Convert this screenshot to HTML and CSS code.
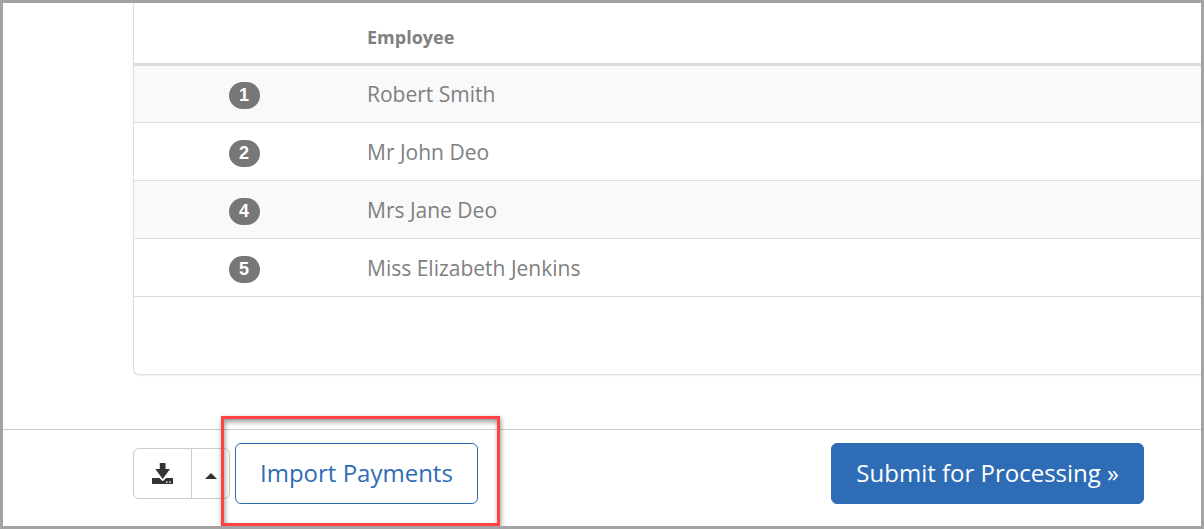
FILE: index.html
```html
<!DOCTYPE html>
<html lang="en">
<head>
    <meta charset="UTF-8">
    <meta name="viewport" content="width=device-width, initial-scale=1.0">
    <title>Import Payments</title>
    <link rel="stylesheet" href="styles.css">
</head>
<body>
    <!-- Employee list -->
    <main class="content">
        <div class="panel">
            <table class="employees">
                <thead>
                    <tr>
                        <th class="number"></th>
                        <th>Employee</th>
                    </tr>
                </thead>
                <tbody>
                    <tr>
                        <td class="number"><span class="badge">1</span></td>
                        <td>Robert Smith</td>
                    </tr>
                    <tr>
                        <td class="number"><span class="badge">2</span></td>
                        <td>Mr John Deo</td>
                    </tr>
                    <tr>
                        <td class="number"><span class="badge">4</span></td>
                        <td>Mrs Jane Deo</td>
                    </tr>
                    <tr>
                        <td class="number"><span class="badge">5</span></td>
                        <td>Miss Elizabeth Jenkins</td>
                    </tr>
                </tbody>
            </table>
        </div>
    </main>

    <!-- Action bar -->
    <footer class="actions">
        <div class="btn-group">
            <button class="btn btn-download" type="button" aria-label="Download">
                <svg width="22" height="22" viewBox="0 0 22 22" fill="#333">
                    <path d="M7.800 0h5.700v6H18L10.700 16 3.300 6h4.500z"/>
                    <path fill-rule="evenodd" d="M0 15h7.800l2.900 3 2.900-3H21v6H0zM14 18.500v1.300h1.500v-1.300zM17.200 18.500v1.300h1.500v-1.300z"/>
                    <path d="M7.200 14.300l3.500 3.500 3.500-3.500" fill="none" stroke="#fff"/>
                </svg>
            </button>
            <button class="btn btn-caret" type="button" aria-label="More downloads"><span class="caret"></span></button>
        </div>
        <div class="highlight">
            <button class="btn btn-large btn-outline" type="button">Import Payments</button>
        </div>
        <button class="btn btn-large btn-primary" type="button">Submit for Processing »</button>
    </footer>
</body>
</html>
```

FILE: styles.css
```css
* {
    box-sizing: border-box;
}

body {
    margin: 0;
    min-height: 100vh;
    border: 3px solid #a3a3a3;
    background-color: #fff;
    color: #808080;
    font-family: "Open Sans", "Noto Sans", sans-serif;
    font-size: 21px;
}

.content {
    padding-left: 130px;
}

.panel {
    padding-bottom: 77px;
    border: 1px solid #ddd;
    border-width: 0 0 1px 1px;
    border-bottom-left-radius: 6px;
    box-shadow: 0 1px 2px rgba(0, 0, 0, 0.06);
}

.employees {
    width: 100%;
    border-collapse: separate;
    border-spacing: 0;
    table-layout: fixed;
}

.employees th,
.employees td {
    padding: 0 13px;
    text-align: left;
}

.employees th {
    height: 63px;
    padding-top: 8px;
    border-bottom: 3px solid #ddd;
    font-size: 18px;
}

.employees td {
    height: 58px;
    border-bottom: 1px solid #ddd;
    line-height: 28px;
}

.employees tbody tr:nth-child(odd) {
    background-color: #f9f9f9;
}

.employees .number {
    width: 220px;
    text-align: center;
}

.employees tbody tr:first-child td {
    height: 57px;
}

.employees td.number {
    padding-top: 1px;
}

.badge {
    display: inline-block;
    min-width: 31px;
    padding: 0 10px;
    border-radius: 14px;
    background-color: #777;
    color: #fff;
    font-family: "Liberation Sans", Arial, sans-serif;
    font-size: 18px;
    font-weight: bold;
    line-height: 27px;
    vertical-align: middle;
}

/* Buttons */
.actions {
    display: flex;
    align-items: center;
    margin-top: 54px;
    padding: 13px 57px 22px 130px;
    border-top: 1px solid #ccc;
}

.btn {
    display: flex;
    align-items: center;
    justify-content: center;
    height: 51px;
    padding: 0;
    border: 1px solid #ccc;
    border-radius: 6px;
    background-color: #fff;
    font-family: inherit;
    cursor: pointer;
}

.btn-group {
    display: flex;
    margin-right: 5px;
}

.btn-download {
    width: 59px;
    border-radius: 6px 0 0 6px;
}

.btn-caret {
    width: 39px;
    margin-left: -1px;
    border-radius: 0 6px 6px 0;
}

.caret {
    margin-top: 4px;
    border: 6px solid transparent;
    border-top: 0;
    border-bottom-color: #333;
}

.btn-large {
    height: 61px;
    padding: 0 24px 2px;
    font-size: 24px;
}

.btn-outline {
    border-color: #2e6db6;
    color: #2e6db6;
}

.btn-primary {
    margin-left: auto;
    border-color: #2e6db6;
    background-color: #2e6db6;
    color: #fff;
}

/* Red frame around the import button */
.highlight {
    position: relative;
}

.highlight::after {
    content: "";
    position: absolute;
    inset: -27px -22px -22px -14px;
    border: 3px solid #ff4343;
    box-shadow: 1px 2px 5px rgba(0, 0, 0, 0.4), inset 1px 3px 5px rgba(0, 0, 0, 0.4);
    pointer-events: none;
}
```
